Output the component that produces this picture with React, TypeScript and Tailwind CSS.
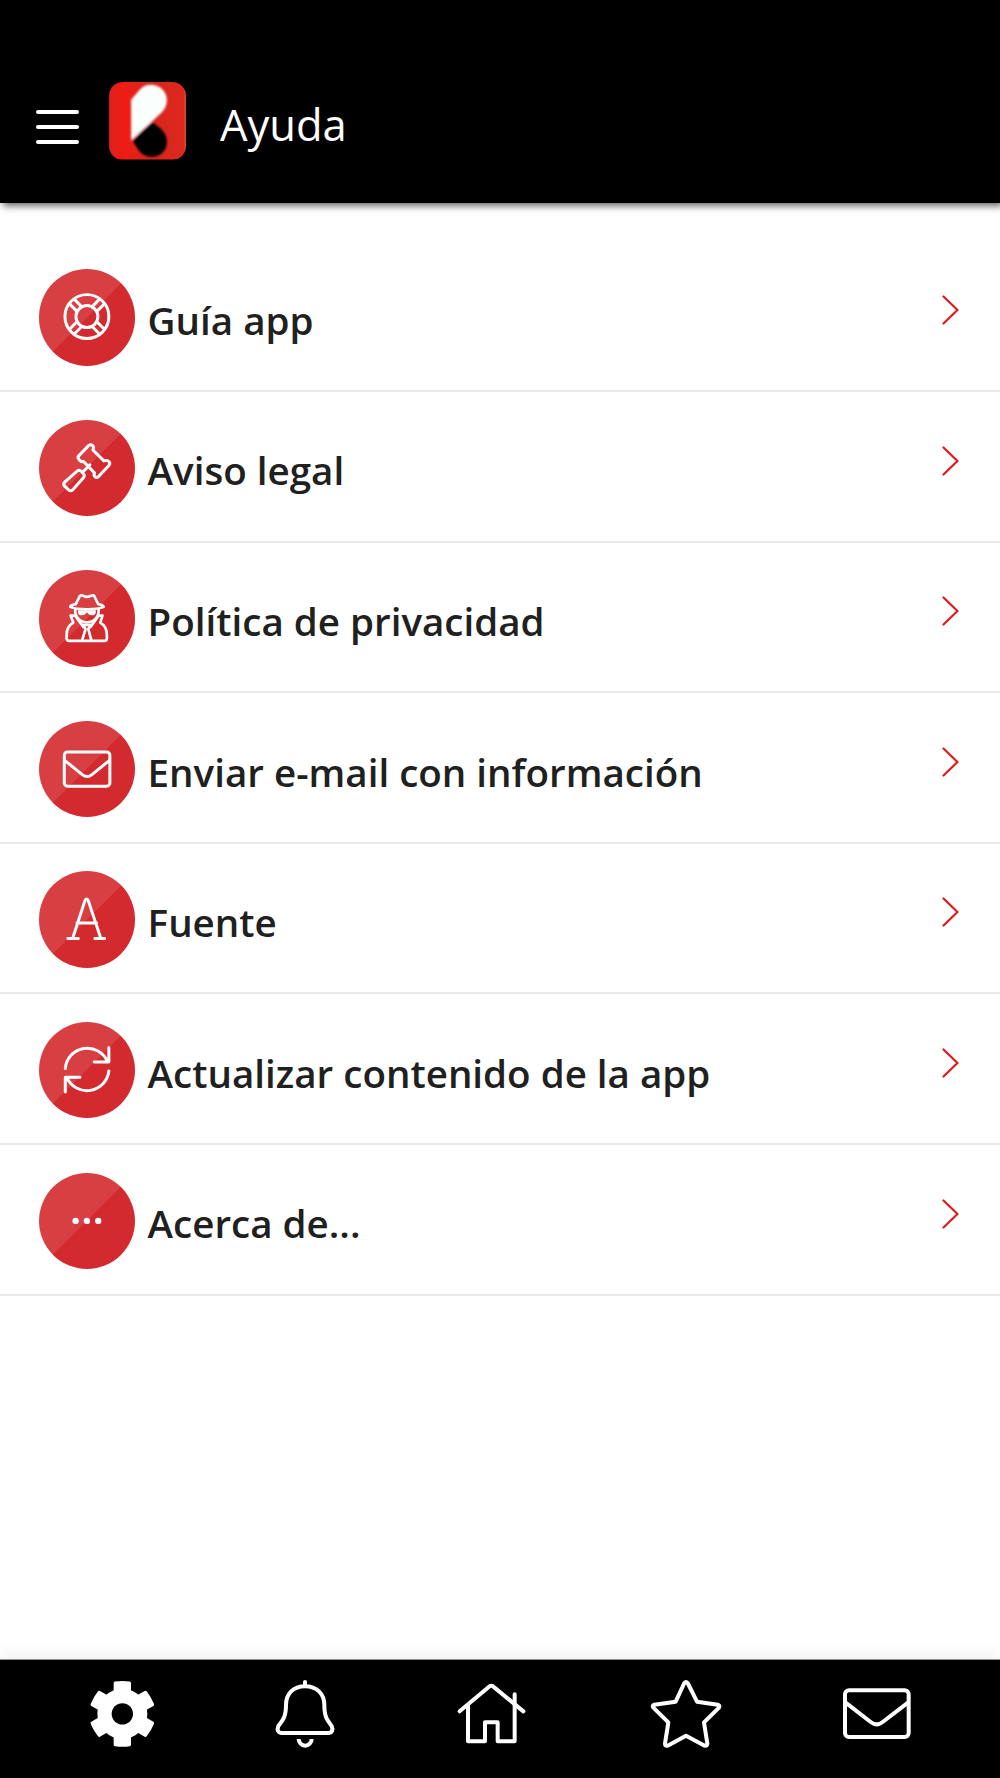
import type { ReactNode } from "react";

const HelpIcon = () => (
  <g>
    <circle cx="-1" cy="-2" r="66" />
    <circle cx="-1" cy="-2" r="33" />
    {[45, 135, 225, 315].map((angle) => (
      <path key={angle} d="M32 -10H64M32 10H64" transform={`translate(-1 -2) rotate(${angle})`} />
    ))}
  </g>
);

const GavelIcon = () => (
  <g>
    <path d="M4 -68L-25 -38Q-30 -33 -26 -28L-22 -23Q-18 -18 -12 -21L22 14Q18 20 23 25Q28 30 34 25L65 -8Q70 -14 66 -19Q61 -25 50 -22L17 -55Q21 -63 16 -68Q10 -73 4 -68Z" />
    <path d="M-14 12L8 -10" />
    <path d="M-68 42L-31 9Q-24 3 -18 9L-11 17Q-7 22 -11 28L-44 65Q-50 70 -56 65L-68 54Q-73 48 -68 42Z" />
  </g>
);

const SpyIcon = () => (
  <g strokeWidth="8">
    <path d="M-35 -42L-22 -67Q-19 -71 -12 -67Q-1 -61 10 -67Q18 -71 21 -67L33 -42Q51 -39 49 -34Q36 -27 -1 -27Q-38 -27 -51 -34Q-53 -39 -35 -42Z" />
    <path d="M-36 -25C-38 -5 -22 12 -1 12C20 12 36 -5 34 -25" />
    <path d="M-28 -24H26C26 -13 24 -9 15 -9C7 -9 3 -12 -1 -18C-5 -12 -9 -9 -17 -9C-26 -9 -28 -13 -28 -24Z" fill="white" stroke="none" />
    <path d="M-39 -8H-50L-42 13Q-62 24 -62 50V60Q-62 68 -54 68H51Q59 68 59 60V50Q59 24 39 13L46 -8H37" />
    <path d="M-35 -6L-12 26M33 -6L10 26M-12 20H10M-12 22L-5 32L-15 65M10 22L3 32L12 65" />
  </g>
);

const MailIcon = () => (
  <g>
    <rect x="-69" y="-52" width="137" height="103" rx="10" />
    <path d="M-67 -26L-15 16Q0 28 14 16L66 -26" />
  </g>
);

const FontIcon = () => (
  <g>
    <path d="M-44 58L-7 -56Q-2 -65 3 -56L41 58M-31 11H28M-58 58H-27M23 58H52" />
  </g>
);

const RefreshIcon = () => (
  <g>
    <path d="M-66 -5A66 66 0 0 1 61 -25M65 -68V-25H21" />
    <path d="M65 2A66 66 0 0 1 -61 22M-66 65V21H-22" />
  </g>
);

const DotsIcon = () => (
  <g fill="white" stroke="none">
    <circle cx="-35" cy="-1" r="9.5" />
    <circle cx="-1" cy="-1" r="9.5" />
    <circle cx="33" cy="-1" r="9.5" />
  </g>
);

const items = [
  { label: "Guía app", icon: <HelpIcon /> },
  { label: "Aviso legal", icon: <GavelIcon /> },
  { label: "Política de privacidad", icon: <SpyIcon /> },
  { label: "Enviar e-mail con información", icon: <MailIcon /> },
  { label: "Fuente", icon: <FontIcon /> },
  { label: "Actualizar contenido de la app", icon: <RefreshIcon /> },
  { label: "Acerca de...", icon: <DotsIcon /> },
];

function Logo() {
  return (
    <svg viewBox="0 0 230 232" className="ml-[30px] mt-[82px] h-[77.5px] w-[77px] shrink-0 rounded-[14px]">
      <defs>
        <linearGradient id="logo-bg">
          <stop offset="0" stopColor="#e0201b" />
          <stop offset="0.2" stopColor="#ee1c16" />
          <stop offset="0.5" stopColor="#d8251d" />
          <stop offset="0.97" stopColor="#dc281e" />
          <stop offset="1" stopColor="#f04f3c" />
        </linearGradient>
        <filter id="logo-soft">
          <feGaussianBlur stdDeviation="3" />
        </filter>
      </defs>
      <rect width="230" height="232" fill="url(#logo-bg)" />
      <g filter="url(#logo-soft)">
        <path d="M70 175L128 120C156 138 173 154 173 180C173 207 151 224 126 224C110 224 98 216 89 205Z" fill="#030504" />
        <path d="M66 175V53L91 24C105 6 130 4 149 14C169 25 177 47 171 68C168 80 161 88 151 97Z" fill="#f8fffc" />
      </g>
    </svg>
  );
}

function MenuRow({ label, icon }: { label: string; icon: ReactNode }) {
  return (
    <li className="flex h-[150.6px] items-start border-b-[2px] border-[#e9e9e9] pl-[38.5px] pr-[41px]">
      <div className="mt-[27.5px] h-[96.5px] w-[96.5px] shrink-0 rounded-full bg-[linear-gradient(135deg,#d83f43_50%,#d32a2f_50%)]">
        <svg viewBox="-145 -145 290 290" className="size-full" fill="none" stroke="white" strokeWidth="9" strokeLinecap="round" strokeLinejoin="round">
          {icon}
        </svg>
      </div>
      <span className="ml-[12.6px] mt-[51.3px] flex-1 whitespace-nowrap text-[38.55px] leading-[54px] font-semibold text-[#1f2120]">{label}</span>
      <svg viewBox="0 0 17 30" className="mt-[53.5px] h-[30px] w-[17px]" fill="none" stroke="#e2191b" strokeWidth="2.2" strokeLinecap="round" strokeLinejoin="round">
        <path d="M1.5 1.5L15.5 15L1.5 28.5" />
      </svg>
    </li>
  );
}

function TabBar() {
  return (
    <nav className="flex h-[118px] items-start bg-black pl-[86px] pt-[18px] shadow-[0_-1px_0_#8f8f8f,0_-3px_18px_rgba(0,0,0,0.08)]">
      <svg viewBox="78 84 216 216" className="size-[72px]" fill="white">
        <circle cx="187" cy="191.5" r="75" />
        {[0, 60, 120, 180, 240, 300].map((angle) => (
          <path key={angle} d="M161 130V99Q161 95 165 94.5Q187 91.5 209 94.5Q213 95 213 99V130Z" transform={`rotate(${angle} 187 191.5)`} />
        ))}
        <circle cx="187" cy="191.5" r="32" fill="black" />
      </svg>
      <svg viewBox="627 84 216 216" className="ml-[111px] size-[72px]" fill="none" stroke="white" strokeWidth="12" strokeLinecap="round" strokeLinejoin="round">
        <path d="M735 109C700 109 678 131 678 165C678 200 669 210 655 228Q648 246 664 249H807Q822 246 815 228C801 210 793 200 793 165C793 131 770 109 735 109ZM735 96V108" />
        <path d="M716 267A19.5 20 0 0 0 755 267" strokeLinecap="butt" />
      </svg>
      <svg viewBox="75 84 216 216" className="ml-[114px] size-[72px]" fill="none" stroke="white" strokeWidth="12" strokeLinecap="round" strokeLinejoin="round">
        <path d="M89 184L179 109Q184 106 189 109L280 184" />
        <path d="M114 166V274H165V217H203V274H254V133" />
      </svg>
      <svg viewBox="660 84 216 216" className="ml-[123px] size-[72px]" fill="none" stroke="white" strokeWidth="12" strokeLinecap="round" strokeLinejoin="round">
        <path d="M763 99Q768 93 773 99L801 155L863 164Q871 167 867 173L822 217L832 281Q831 289 824 287L768 257L713 287Q705 289 705 281L715 217L670 173Q665 167 673 164L737 155Z" />
      </svg>
      <svg viewBox="123 114 216 216" className="ml-[119px] size-[72px]" fill="none" stroke="white" strokeWidth="12" strokeLinecap="round" strokeLinejoin="round">
        <rect x="135" y="151" width="191" height="140" rx="12" />
        <path d="M137 188L212 246Q230 260 248 246L324 188" />
      </svg>
    </nav>
  );
}

export default function App() {
  return (
    <div className="flex h-[1778px] w-[1000px] flex-col overflow-hidden bg-white font-['Open_Sans','Noto_Sans',sans-serif]">
      <header className="flex h-[203px] shrink-0 items-start bg-black pl-9 shadow-[3px_3px_7px_rgba(0,0,0,0.6)]">
        <div className="mt-[110px] flex w-[43px] flex-col gap-[11.5px]">
          <span className="h-[3.5px] rounded-full bg-white" />
          <span className="h-[3.5px] rounded-full bg-white" />
          <span className="h-[3.5px] rounded-full bg-white" />
        </div>
        <Logo />
        <h1 className="ml-[34px] mt-[96px] text-[43.5px] leading-[58px] font-normal text-white">Ayuda</h1>
      </header>

      <main className="flex-1 pt-[38.5px]">
        <ul>
          {items.map((item) => (
            <MenuRow key={item.label} label={item.label} icon={item.icon} />
          ))}
        </ul>
      </main>

      <TabBar />
    </div>
  );
}
